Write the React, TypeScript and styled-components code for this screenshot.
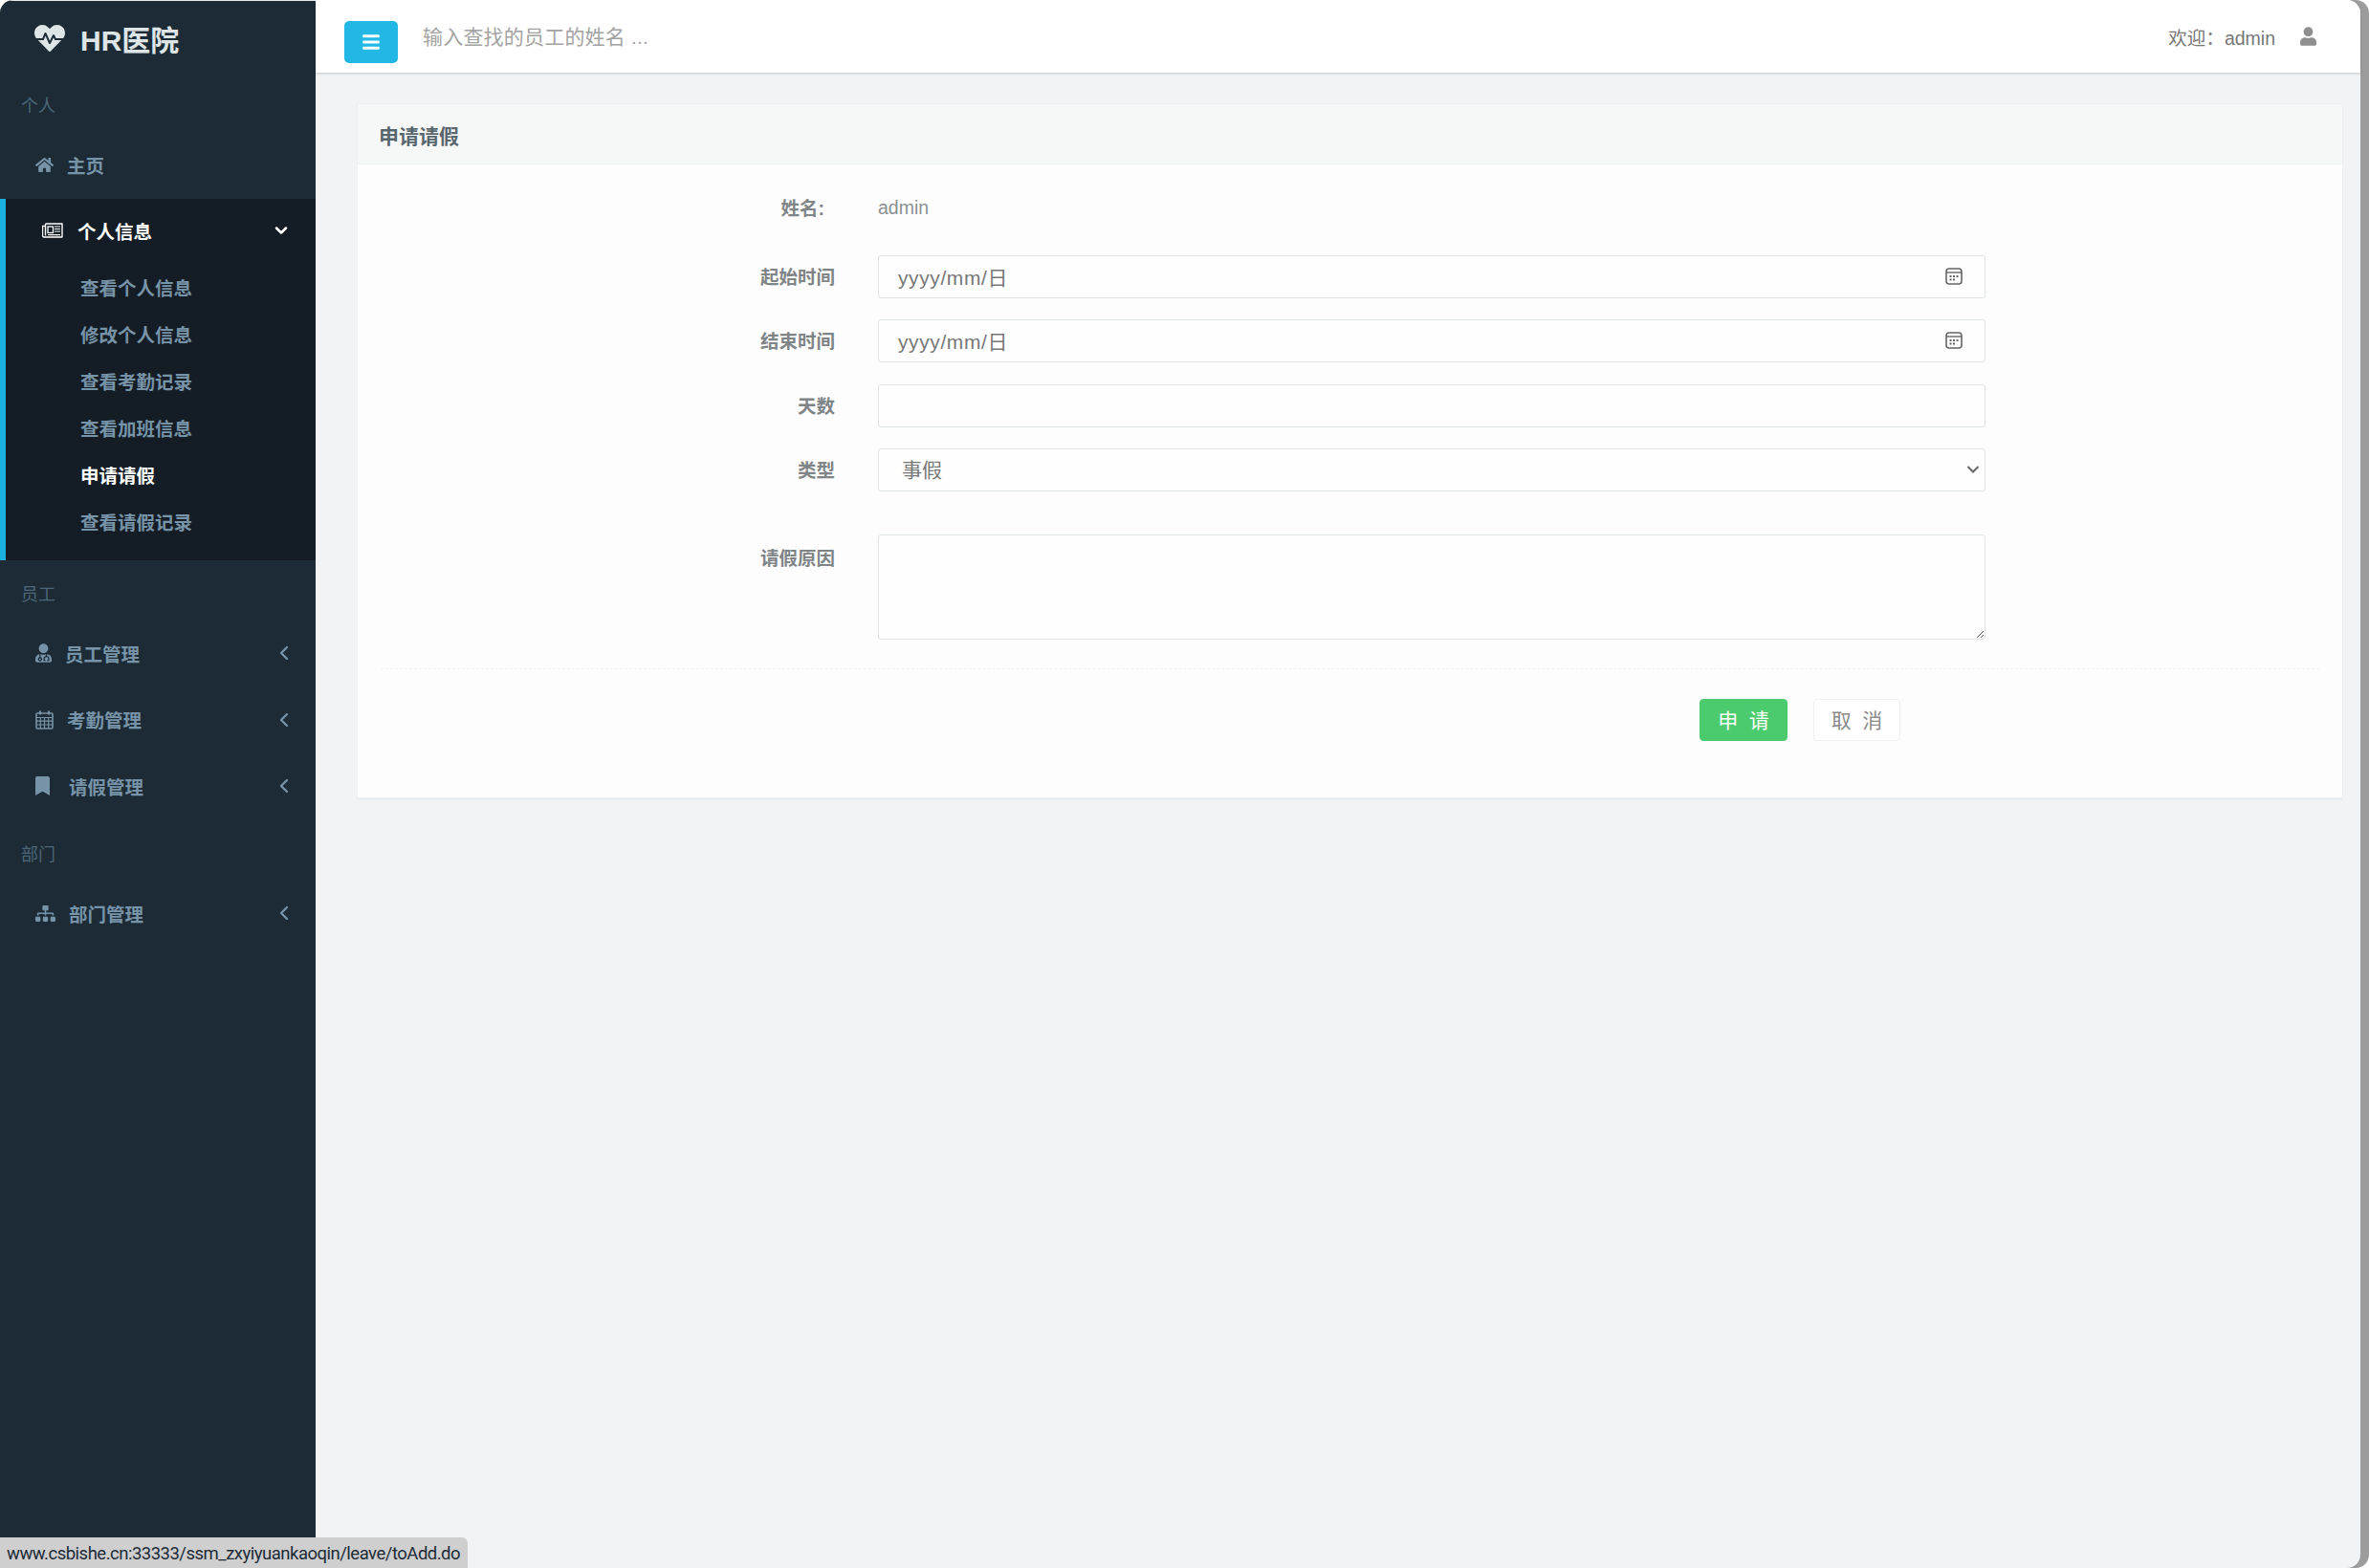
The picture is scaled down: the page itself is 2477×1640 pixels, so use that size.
import React from 'react';
import styled, { createGlobalStyle } from 'styled-components';
import { ChevronDown, ChevronLeft } from 'lucide-react';
import { FaBars, FaBookmark, FaHeartbeat, FaHome, FaSitemap, FaUser, FaUserMd } from 'react-icons/fa';

const FONT = '"Liberation Sans", "Noto Sans CJK SC", sans-serif';

const GlobalStyle = createGlobalStyle`
  html, body {
    margin: 0;
    padding: 0;
    background: #fff;
  }
  * {
    box-sizing: border-box;
  }
`;

const Screen = styled.div`
  width: 2477px;
  height: 1640px;
  display: flex;
  overflow: hidden;
  background: #9c9c9c;
  border-radius: 14px;
  font-family: ${FONT};
`;

const Sidebar = styled.aside`
  width: 330px;
  flex-shrink: 0;
  background: #1c2b36;
  border-top: 1px solid #e8eaec;
  display: flex;
  flex-direction: column;
`;

const Brand = styled.div`
  height: 77.5px;
  padding-left: 36px;
  display: flex;
  align-items: center;
  color: #dee5e7;
  font-size: 30px;
  font-weight: 700;
`;

const BrandIcon = styled(FaHeartbeat)`
  width: 32px;
  height: 32px;
  margin: 1px 16px 0 0;
`;

const Section = styled.div<{ $first?: boolean }>`
  height: ${p => (p.$first ? '60px' : '63.5px')};
  padding: ${p => (p.$first ? '0' : '5px')} 0 0 22px;
  display: flex;
  align-items: center;
  font-size: 18px;
  color: #4d6678;
`;

const Row = styled.div<{ $gap: number }>`
  height: 69.5px;
  padding: 0 21px 2.5px 37px;
  display: flex;
  align-items: center;
  gap: ${p => p.$gap}px;
  color: #7793a7;
  font-size: 19.5px;
  font-weight: 700;
`;

const RowLabel = styled.span`
  flex: 1;
`;

const HomeIcon = styled(FaHome)`
  width: 19px;
  height: 17px;
`;

const DoctorIcon = styled(FaUserMd)`
  width: 17px;
  height: 20px;
`;

const BookmarkIcon = styled(FaBookmark)`
  width: 15px;
  height: 20px;
`;

const SitemapIcon = styled(FaSitemap)`
  width: 21px;
  height: 19px;
`;

const Caret = styled(ChevronLeft)`
  width: 24px;
  height: 24px;
  stroke-width: 2.4;
`;

const ActiveGroup = styled.div`
  height: 378px;
  background: #141d25;
  border-left: 6px solid #19b1e0;
  padding-bottom: 15.5px;
`;

const GroupHead = styled.div`
  height: 68.5px;
  padding: 0 26px 2px 38px;
  display: flex;
  align-items: center;
  gap: 15px;
  color: #fff;
  font-size: 19.5px;
  font-weight: 700;
`;

const OpenCaret = styled(ChevronDown)`
  width: 20px;
  height: 20px;
  stroke-width: 3;
`;

const SubLink = styled.div<{ $active?: boolean }>`
  height: 49px;
  padding: 0 0 2px 78px;
  display: flex;
  align-items: center;
  color: ${p => (p.$active ? '#fff' : '#7793a7')};
  font-size: 19.5px;
  font-weight: 700;
`;

const Main = styled.main`
  flex: 1;
  margin-right: 9px;
  background: #f1f3f5;
  border-radius: 0 14px 14px 0;
  display: flex;
  flex-direction: column;
  min-width: 0;
`;

const TopBar = styled.header`
  height: 76px;
  flex-shrink: 0;
  background: #fff;
  box-shadow: 0 1px 3px rgba(0, 0, 0, 0.18);
  border-radius: 0 14px 0 0;
  padding: 0 46px 0 30px;
  display: flex;
  align-items: center;
`;

const MenuButton = styled.button`
  width: 56px;
  height: 44px;
  margin-top: 12px;
  padding: 0;
  border: 0;
  border-radius: 5px;
  background: #23b7e5;
  color: #fff;
  display: flex;
  align-items: center;
  justify-content: center;
`;

const SearchInput = styled.input`
  flex: 1;
  margin: 1px 0 0 26px;
  border: 0;
  outline: 0;
  padding: 0;
  background: transparent;
  font-family: ${FONT};
  font-size: 21px;
  letter-spacing: 0.2px;
  &::placeholder {
    color: #a3a3a3;
    opacity: 1;
  }
`;

const Welcome = styled.span`
  color: #777;
  font-size: 19.5px;
`;

const UserIcon = styled(FaUser)`
  width: 17px;
  height: 20px;
  margin-left: 26px;
  color: #8f8f8f;
`;

const Content = styled.div`
  padding: 32px 18px 0 43px;
`;

const Card = styled.section`
  height: 729px;
  background: #fdfdfd;
  border: 1px solid #edf0f1;
  border-bottom: 3px solid #ebeef0;
`;

const CardHead = styled.h2`
  margin: 0;
  height: 63px;
  padding: 1px 0 0 22px;
  display: flex;
  align-items: center;
  background: #f6f8f8;
  border-bottom: 1px solid #edf1f2;
  color: #58666e;
  font-size: 21px;
  font-weight: 700;
`;

const Form = styled.form`
  padding-top: 28px;
`;

const FormRow = styled.div<{ $below?: number }>`
  display: grid;
  grid-template-columns: 499px 1158px;
  column-gap: 45px;
  margin-bottom: ${p => p.$below ?? 22}px;
  align-items: center;
`;

const Label = styled.label<{ $inset?: number; $top?: boolean }>`
  justify-self: end;
  align-self: ${p => (p.$top ? 'start' : 'center')};
  margin-bottom: ${p => (p.$top ? '0' : '2px')};
  padding-right: ${p => p.$inset ?? 0}px;
  padding-top: ${p => (p.$top ? '9px' : '0')};
  color: #7f8487;
  font-size: 19.5px;
  font-weight: 700;
`;

const StaticValue = styled.div`
  height: 34px;
  line-height: 34px;
  color: #8a8f92;
  font-size: 19.5px;
`;

const Field = styled.div`
  height: 45px;
  padding: 0 23.5px 2px 20px;
  display: flex;
  align-items: center;
  justify-content: space-between;
  background: #fefefe;
  border: 1.5px solid #dfe4e6;
  border-radius: 3px;
  color: #777;
  font-size: 21px;
  letter-spacing: 0.6px;
`;

const TextInput = styled.input`
  display: block;
  width: 100%;
  height: 45px;
  background: #fefefe;
  border: 1.5px solid #dfe4e6;
  border-radius: 3px;
`;

const SelectWrap = styled.div`
  position: relative;
`;

const Select = styled.select`
  display: block;
  width: 100%;
  height: 45px;
  padding: 0 24px;
  appearance: none;
  background: #fefefe;
  border: 1.5px solid #dfe4e6;
  border-radius: 3px;
  color: #777;
  font-family: ${FONT};
  font-size: 21px;
`;

const SelectArrow = styled.svg`
  position: absolute;
  right: 6px;
  top: 17px;
  width: 14px;
  height: 10px;
`;

const Textarea = styled.textarea`
  display: block;
  width: 100%;
  height: 110px;
  background: #fefefe;
  border: 1.5px solid #dfe4e6;
  border-radius: 3px;
`;

const Divider = styled.div`
  margin: 0 24px;
  border-top: 1.5px dashed #eef1f2;
`;

const Actions = styled.div`
  padding: 31px 0 0 1403px;
  display: flex;
  gap: 27px;
`;

const Button = styled.button<{ $primary?: boolean }>`
  width: ${p => (p.$primary ? '92px' : '91px')};
  height: 44px;
  padding: 0 0 2px;
  border: 1.5px solid ${p => (p.$primary ? '#4ccb6e' : '#edf0f1')};
  border-radius: 4px;
  background: ${p => (p.$primary ? '#4ccb6e' : '#fff')};
  color: ${p => (p.$primary ? '#fff' : '#8a8a8a')};
  font-family: ${FONT};
  font-size: 21px;
`;

const StatusBar = styled.div`
  position: fixed;
  left: 0;
  bottom: 0;
  width: 489px;
  height: 32px;
  padding: 2px 0 0 7px;
  display: flex;
  align-items: center;
  background: #cfcfcf;
  border-radius: 0 6px 0 0;
  color: #1c2b36;
  font-family: Roboto, sans-serif;
  font-size: 18.5px;
  letter-spacing: -0.5px;
`;

const DateIcon: React.FC = () => (
  <svg width="18" height="18" viewBox="0 0 18 18" fill="none">
    <rect x="1" y="1" width="16" height="16" rx="3" stroke="#666" strokeWidth="1.6" />
    <path d="M1 5h16" stroke="#666" strokeWidth="1.4" />
    <g fill="#666">
      <rect x="4.5" y="8" width="2" height="2" />
      <rect x="8" y="8" width="2" height="2" />
      <rect x="11.5" y="8" width="2" height="2" />
      <rect x="4.5" y="11.5" width="2" height="2" />
      <rect x="8" y="11.5" width="2" height="2" />
    </g>
  </svg>
);

const NewspaperIcon: React.FC = () => (
  <svg width="22" height="16" viewBox="0 0 22 16" fill="none" stroke="#fff">
    <path d="M3.5 1h17.5v13.5a.5.5 0 0 1-.5.5H2a1.5 1.5 0 0 1-1.5-1.5V3.5h3" strokeWidth="1.4" />
    <path d="M3.5 1v12.5" strokeWidth="1.4" />
    <rect x="6" y="4" width="5.5" height="6.5" strokeWidth="1.3" />
    <path d="M13 4h6M13 6.5h6M13 9h6M6 12.7h13" strokeWidth="1.2" />
  </svg>
);

const CalendarIcon: React.FC = () => (
  <svg width="19" height="20" viewBox="0 0 19 20" fill="none" stroke="#7793a7">
    <rect x="1" y="3" width="17" height="16" rx="1" strokeWidth="1.6" />
    <path d="M1 7.5h17M1 11.2h17M1 15h17M5.3 7.5V19M9.5 7.5V19M13.7 7.5V19" strokeWidth="1.2" />
    <path d="M5 0.5v4M14 0.5v4" strokeWidth="2.2" />
  </svg>
);

const subLinks = ['查看个人信息', '修改个人信息', '查看考勤记录', '查看加班信息', '申请请假', '查看请假记录'];

const App: React.FC = () => (
  <>
    <GlobalStyle />
    <Screen>
      <Sidebar>
        <Brand>
          <BrandIcon />
          HR医院
        </Brand>
        <Section $first>个人</Section>
        <Row $gap={14}>
          <HomeIcon />
          <RowLabel>主页</RowLabel>
        </Row>
        <ActiveGroup>
          <GroupHead>
            <NewspaperIcon />
            <RowLabel>个人信息</RowLabel>
            <OpenCaret />
          </GroupHead>
          {subLinks.map(text => (
            <SubLink key={text} $active={text === '申请请假'}>
              {text}
            </SubLink>
          ))}
        </ActiveGroup>
        <Section>员工</Section>
        <Row $gap={14}>
          <DoctorIcon />
          <RowLabel>员工管理</RowLabel>
          <Caret />
        </Row>
        <Row $gap={14}>
          <CalendarIcon />
          <RowLabel>考勤管理</RowLabel>
          <Caret />
        </Row>
        <Row $gap={20}>
          <BookmarkIcon />
          <RowLabel>请假管理</RowLabel>
          <Caret />
        </Row>
        <Section>部门</Section>
        <Row $gap={14}>
          <SitemapIcon />
          <RowLabel>部门管理</RowLabel>
          <Caret />
        </Row>
      </Sidebar>
      <Main>
        <TopBar>
          <MenuButton type="button">
            <FaBars size={20} />
          </MenuButton>
          <SearchInput placeholder="输入查找的员工的姓名 ..." />
          <Welcome>欢迎{'\uFF1A'}admin</Welcome>
          <UserIcon />
        </TopBar>
        <Content>
          <Card>
            <CardHead>申请请假</CardHead>
            <Form>
              <FormRow $below={33}>
                <Label $inset={11}>姓名:</Label>
                <StaticValue>admin</StaticValue>
              </FormRow>
              <FormRow>
                <Label>起始时间</Label>
                <Field>
                  yyyy/mm/日
                  <DateIcon />
                </Field>
              </FormRow>
              <FormRow $below={23}>
                <Label>结束时间</Label>
                <Field>
                  yyyy/mm/日
                  <DateIcon />
                </Field>
              </FormRow>
              <FormRow>
                <Label>天数</Label>
                <TextInput />
              </FormRow>
              <FormRow $below={45}>
                <Label>类型</Label>
                <SelectWrap>
                  <Select defaultValue="事假">
                    <option>事假</option>
                    <option>病假</option>
                  </Select>
                  <SelectArrow viewBox="0 0 14 10" fill="none">
                    <path d="M1.5 2l5.5 5.5L12.5 2" stroke="#666" strokeWidth="2" />
                  </SelectArrow>
                </SelectWrap>
              </FormRow>
              <FormRow $below={30}>
                <Label $top>请假原因</Label>
                <Textarea />
              </FormRow>
              <Divider />
              <Actions>
                <Button $primary type="button">
                  申&nbsp;&nbsp;请
                </Button>
                <Button type="button">取&nbsp;&nbsp;消</Button>
              </Actions>
            </Form>
          </Card>
        </Content>
      </Main>
    </Screen>
    <StatusBar>www.csbishe.cn:33333/ssm_zxyiyuankaoqin/leave/toAdd.do</StatusBar>
  </>
);

export default App;
